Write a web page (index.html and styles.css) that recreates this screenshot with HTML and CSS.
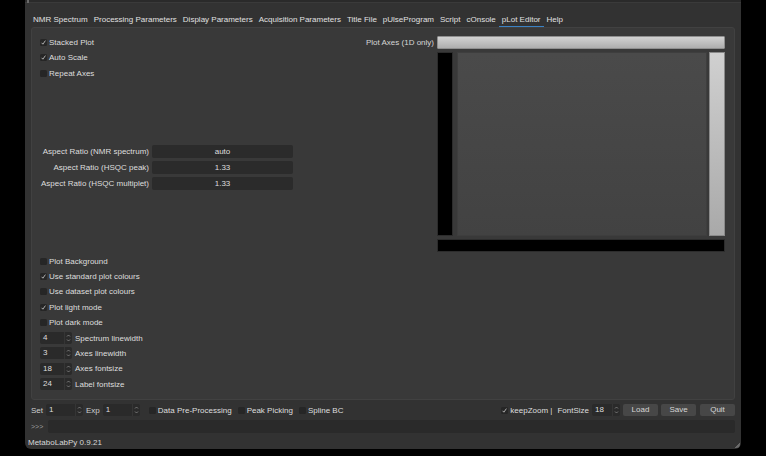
FILE: index.html
```html
<!DOCTYPE html>
<html>
<head>
<meta charset="utf-8">
<link rel="stylesheet" href="styles.css">
</head>
<body>
<div class="window">
  <div class="topstrip"><span class="grip"></span></div>
  <div class="tabs">
    <span class="tab">NMR Spectrum</span>
    <span class="tab">Processing Parameters</span>
    <span class="tab">Display Parameters</span>
    <span class="tab">Acquisition Parameters</span>
    <span class="tab">Title File</span>
    <span class="tab">pUlseProgram</span>
    <span class="tab">Script</span>
    <span class="tab">cOnsole</span>
    <span class="tab active">pLot Editor</span>
    <span class="tab">Help</span>
  </div>
  <div class="panel">
    <div class="left">
      <div class="chk"><span class="box on"><svg viewBox="0 0 7 7"><path d="M1.6 3.8 L2.9 5.2 L5.4 1.6" fill="none" stroke="#cfcfcf" stroke-width="0.8"/></svg></span>Stacked Plot</div>
      <div class="chk"><span class="box on"><svg viewBox="0 0 7 7"><path d="M1.6 3.8 L2.9 5.2 L5.4 1.6" fill="none" stroke="#cfcfcf" stroke-width="0.8"/></svg></span>Auto Scale</div>
      <div class="chk"><span class="box"></span>Repeat Axes</div>

      <div class="aspects">
        <div class="ar"><span class="arl">Aspect Ratio (NMR spectrum)</span><span class="field">auto</span></div>
        <div class="ar"><span class="arl">Aspect Ratio (HSQC peak)</span><span class="field">1.33</span></div>
        <div class="ar"><span class="arl">Aspect Ratio (HSQC multiplet)</span><span class="field">1.33</span></div>
      </div>

      <div class="lower">
        <div class="chk"><span class="box"></span>Plot Background</div>
        <div class="chk"><span class="box on"><svg viewBox="0 0 7 7"><path d="M1.6 3.8 L2.9 5.2 L5.4 1.6" fill="none" stroke="#cfcfcf" stroke-width="0.8"/></svg></span>Use standard plot colours</div>
        <div class="chk"><span class="box"></span>Use dataset plot colours</div>
        <div class="chk"><span class="box on"><svg viewBox="0 0 7 7"><path d="M1.6 3.8 L2.9 5.2 L5.4 1.6" fill="none" stroke="#cfcfcf" stroke-width="0.8"/></svg></span>Plot light mode</div>
        <div class="chk"><span class="box"></span>Plot dark mode</div>
        <div class="srow"><span class="spin w32"><span class="val">4</span><span class="arrows"><svg viewBox="0 0 5 10"><path d="M1 3.5 L2.5 2 L4 3.5 M1 6.5 L2.5 8 L4 6.5" fill="none" stroke="#8a8a8a" stroke-width="0.8"/></svg></span></span>Spectrum linewidth</div>
        <div class="srow"><span class="spin w32"><span class="val">3</span><span class="arrows"><svg viewBox="0 0 5 10"><path d="M1 3.5 L2.5 2 L4 3.5 M1 6.5 L2.5 8 L4 6.5" fill="none" stroke="#8a8a8a" stroke-width="0.8"/></svg></span></span>Axes linewidth</div>
        <div class="srow"><span class="spin w32"><span class="val">18</span><span class="arrows"><svg viewBox="0 0 5 10"><path d="M1 3.5 L2.5 2 L4 3.5 M1 6.5 L2.5 8 L4 6.5" fill="none" stroke="#8a8a8a" stroke-width="0.8"/></svg></span></span>Axes fontsize</div>
        <div class="srow"><span class="spin w32"><span class="val">24</span><span class="arrows"><svg viewBox="0 0 5 10"><path d="M1 3.5 L2.5 2 L4 3.5 M1 6.5 L2.5 8 L4 6.5" fill="none" stroke="#8a8a8a" stroke-width="0.8"/></svg></span></span>Label fontsize</div>
      </div>
    </div>
    <div class="right">
      <span class="axlabel">Plot Axes (1D only)</span>
      <div class="topbar"></div>
      <span></span>
      <div class="preview">
        <div class="pv-row">
          <div class="pv-black"></div>
          <div class="pv-area"></div>
          <div class="pv-light"></div>
        </div>
        <div class="pv-bottom"></div>
      </div>
    </div>
  </div>

  <div class="toolbar">
    <span class="t-set">Set</span>
    <span class="spin w37 m-set"><span class="val">1</span><span class="arrows"><svg viewBox="0 0 5 10"><path d="M1 3.5 L2.5 2 L4 3.5 M1 6.5 L2.5 8 L4 6.5" fill="none" stroke="#8a8a8a" stroke-width="0.8"/></svg></span></span>
    <span class="t-exp">Exp</span>
    <span class="spin w37 m-exp"><span class="val">1</span><span class="arrows"><svg viewBox="0 0 5 10"><path d="M1 3.5 L2.5 2 L4 3.5 M1 6.5 L2.5 8 L4 6.5" fill="none" stroke="#8a8a8a" stroke-width="0.8"/></svg></span></span>
    <span class="tchk m-c1"><span class="box"></span>Data Pre-Processing</span>
    <span class="tchk m-c2"><span class="box"></span>Peak Picking</span>
    <span class="tchk m-c3"><span class="box"></span>Spline BC</span>
    <span class="tright">
      <span class="tchk"><span class="box on"><svg viewBox="0 0 7 7"><path d="M1.6 3.8 L2.9 5.2 L5.4 1.6" fill="none" stroke="#cfcfcf" stroke-width="0.8"/></svg></span>keepZoom |</span>
      <span class="t-fs">FontSize</span>
      <span class="spin w28 m-fs"><span class="val">18</span><span class="arrows"><svg viewBox="0 0 5 10"><path d="M1 3.5 L2.5 2 L4 3.5 M1 6.5 L2.5 8 L4 6.5" fill="none" stroke="#8a8a8a" stroke-width="0.8"/></svg></span></span>
      <span class="btn m-b1">Load</span>
      <span class="btn m-b2">Save</span>
      <span class="btn m-b3">Quit</span>
    </span>
  </div>
  <div class="console">
    <span class="prompt">&gt;&gt;&gt;</span>
    <span class="cfield"></span>
  </div>
  <div class="status">MetaboLabPy 0.9.21</div>
  <span class="resize"></span>
</div>
</body>
</html>
```

FILE: styles.css
```css
html, body {
  margin: 0;
  padding: 0;
  background: #000;
}
body {
  font-family: "Liberation Sans", Arial, sans-serif;
  font-size: 8px;
  color: #dedede;
}
.window {
  position: relative;
  margin-left: 25px;
  width: 716px;
  height: 449px;
  background: #323232;
  border-radius: 0 0 6px 6px;
  display: flex;
  flex-direction: column;
  box-sizing: border-box;
}
.topstrip {
  height: 3px;
  background: #2a2a2a;
  border-bottom: 1px solid #3a3a3a;
  box-sizing: border-box;
  padding-left: 2px;
}
.grip {
  display: block;
  width: 2px;
  height: 3px;
  background: #6a6a6a;
}
.tabs {
  margin-top: 10px;
  height: 14px;
  padding-left: 5px;
  display: flex;
}
.tab {
  padding: 0 3px;
  line-height: 13px;
  height: 13px;
  border-bottom: 1px solid transparent;
  white-space: nowrap;
  color: #e0e0e0;
}
.tab.active {
  border-bottom-color: #3b82c4;
}
.panel {
  margin-left: 6px;
  width: 704px;
  height: 373px;
  box-sizing: border-box;
  background: #393939;
  border: 1px solid #414141;
  border-radius: 3px;
  padding: 6px 9px 0 7px;
  display: flex;
}
.left {
  width: 262px;
  flex: none;
  padding-top: 0.7px;
}
.chk {
  height: 15.4px;
  display: flex;
  align-items: center;
  white-space: nowrap;
}
.box {
  width: 7px;
  height: 7px;
  background: #262626;
  border-radius: 1.5px;
  margin-left: 1px;
  margin-right: 2px;
  flex: none;
  display: inline-block;
}
.box svg {
  display: block;
  width: 7px;
  height: 7px;
}
.aspects {
  margin-top: 64px;
  display: flex;
  flex-direction: column;
  gap: 3px;
}
.ar {
  display: grid;
  grid-template-columns: 110px 141px;
  column-gap: 3px;
  height: 13px;
  align-items: center;
}
.arl {
  text-align: right;
  white-space: nowrap;
}
.field {
  height: 13px;
  line-height: 13px;
  background: #2b2b2b;
  border-radius: 2px;
  text-align: center;
}
.lower {
  margin-top: 63.5px;
}
.srow {
  height: 15.4px;
  display: flex;
  align-items: center;
  white-space: nowrap;
}
.spin {
  display: flex;
  height: 12px;
  line-height: 12px;
  background: #2a2a2a;
  border-radius: 2px;
  box-sizing: border-box;
  flex: none;
}
.spin .val {
  flex: 1;
  padding-left: 3px;
}
.spin .arrows {
  width: 7px;
  display: flex;
  align-items: center;
  justify-content: center;
  border-left: 1px solid #353535;
}
.spin .arrows svg {
  width: 5px;
  height: 10px;
  display: block;
}
.w32 { width: 32px; margin-left: 1px; margin-right: 3px; }
.w37 { width: 37px; }
.w28 { width: 28px; }
.right {
  flex: 1;
  display: grid;
  grid-template-columns: auto 288px;
  justify-content: end;
  align-content: start;
  column-gap: 3px;
  row-gap: 3px;
  padding-top: 2px;
}
.axlabel {
  line-height: 13px;
  text-align: right;
  color: #d6d6d6;
  white-space: nowrap;
}
.topbar {
  height: 13px;
  box-sizing: border-box;
  border: 1px solid #8f8f8f;
  border-radius: 1px;
  background: linear-gradient(#d2d2d2, #aeaeae);
}
.preview {
  display: flex;
  flex-direction: column;
}
.pv-row {
  display: flex;
  height: 184px;
}
.pv-black {
  width: 16px;
  background: #000;
  border: 1px solid #2c2c2c;
  box-sizing: border-box;
}
.pv-area {
  width: 250px;
  margin-left: 4px;
  box-sizing: border-box;
  border: 1px solid #3e3e3e;
  background: linear-gradient(#4a4a4a, #424242);
}
.pv-light {
  width: 16px;
  margin-left: 2px;
  box-sizing: border-box;
  border: 1px solid #8a8a8a;
  background: linear-gradient(#d0d0d0, #a9a9a9);
}
.pv-bottom {
  margin-top: 3px;
  height: 13px;
  background: #000;
  border: 1px solid #2c2c2c;
  box-sizing: border-box;
}
.toolbar {
  margin-top: 4px;
  height: 12px;
  padding: 0 6px;
  display: flex;
  align-items: center;
  white-space: nowrap;
}
.t-set { color: #cfcfcf; }
.m-set { margin-left: 3px; }
.t-exp { margin-left: 3px; color: #cfcfcf; }
.m-exp { margin-left: 3px; }
.tchk {
  display: flex;
  align-items: center;
}
.tchk .box {
  margin-left: 0;
  margin-right: 2px;
}
.m-c1 { margin-left: 9px; }
.m-c2 { margin-left: 6px; }
.m-c3 { margin-left: 6px; }
.tright {
  margin-left: auto;
  display: flex;
  align-items: center;
}
.t-fs { margin-left: 5px; }
.m-fs { margin-left: 3px; }
.btn {
  width: 35px;
  height: 12px;
  line-height: 12px;
  text-align: center;
  background: #474747;
  border-radius: 2px;
  color: #d6d6d6;
}
.m-b1 { margin-left: 3px; }
.m-b2 { margin-left: 3px; }
.m-b3 { margin-left: 4px; }
.console {
  margin-top: 4px;
  height: 13px;
  padding: 0 6px;
  display: flex;
  align-items: center;
}
.prompt {
  width: 17px;
  color: #9c9c9c;
  font-size: 7px;
}
.cfield {
  flex: 1;
  height: 13px;
  background: #2a2a2a;
  border-radius: 2px;
}
.status {
  margin-top: 5px;
  padding-left: 3px;
  line-height: 10px;
  color: #d8d8d8;
}
.resize {
  position: absolute;
  right: 1px;
  bottom: 1px;
  width: 5px;
  height: 5px;
  background: linear-gradient(135deg, transparent 50%, #6a6a6a 50%);
  border-radius: 0 0 4px 0;
}
```
